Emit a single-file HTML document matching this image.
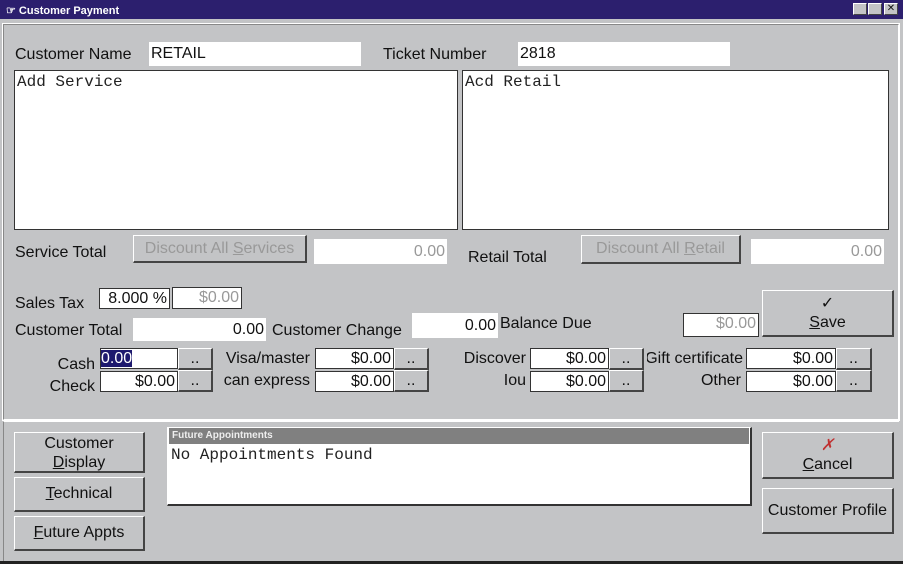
<!DOCTYPE html>
<html><head><meta charset="utf-8"><style>
*{box-sizing:border-box;margin:0;padding:0}
body{width:903px;height:564px;background:#c3c4c6;position:relative;overflow:hidden;font-family:"Liberation Sans",Arial,sans-serif;color:#111}
.a{position:absolute}
.t{position:absolute;font-size:16px;white-space:nowrap;line-height:18px}
.in{position:absolute;background:#fff;font-size:16px;line-height:20px;padding:0 2px;white-space:nowrap;overflow:hidden}
.r{text-align:right}
.g{color:#999}
.btn{position:absolute;background:#c3c4c6;border-top:1px solid #fff;border-left:1px solid #fff;border-right:2px solid #444;border-bottom:2px solid #444;text-align:center;font-size:16px;line-height:19px}
.mono{font-family:"Liberation Mono",monospace;font-size:16px;color:#222}
u{text-decoration:underline}
</style></head><body>
<div class="a" style="left:0;top:0;width:903px;height:19px;background:#2c1f6e"></div>
<div class="t" style="left:6px;top:2px;color:#fff;font-size:11px;font-weight:bold">☞ Customer Payment</div>
<div class="a" style="left:853px;top:3px;width:14px;height:12px;background:#c3c4c6;border:1px solid #fff;border-right-color:#444;border-bottom-color:#444"></div>
<div class="a" style="left:868px;top:3px;width:14px;height:12px;background:#c3c4c6;border:1px solid #fff;border-right-color:#444;border-bottom-color:#444"></div>
<div class="a" style="left:884px;top:3px;width:14px;height:12px;background:#c3c4c6;border:1px solid #fff;border-right-color:#444;border-bottom-color:#444;font-size:10px;line-height:10px;text-align:center">✕</div>
<div class="a" style="left:3px;top:24px;width:896px;height:396px;border:1px solid #888;border-right-color:#fff;border-bottom-color:#fff;outline:1px solid #fff"></div>
<div class="a" style="left:3px;top:421px;width:896px;height:141px;border-top:1px solid #fff;border-left:1px solid #888"></div>
<div class="a" style="left:0;top:561px;width:903px;height:3px;background:#222"></div>

<div class="t" style="left:15px;top:46px">Customer Name</div>
<div class="in" style="left:149px;top:42px;width:212px;height:24px;line-height:24px">RETAIL</div>
<div class="t" style="left:383px;top:46px">Ticket Number</div>
<div class="in" style="left:518px;top:42px;width:212px;height:24px;line-height:24px">2818</div>

<div class="in mono" style="left:14px;top:70px;width:444px;height:160px;border:1px solid #333;line-height:20px;padding:1px 2px">Add Service</div>
<div class="in mono" style="left:462px;top:70px;width:427px;height:160px;border:1px solid #333;line-height:20px;padding:1px 2px">Acd Retail</div>

<div class="t" style="left:15px;top:244px">Service Total</div>
<div class="btn g" style="left:133px;top:235px;width:174px;height:28px;line-height:25px">Discount All <u>S</u>ervices</div>
<div class="in r g" style="left:314px;top:239px;width:133px;height:25px;line-height:25px">0.00</div>
<div class="t" style="left:468px;top:249px">Retail Total</div>
<div class="btn g" style="left:581px;top:235px;width:160px;height:29px;line-height:25px">Discount All <u>R</u>etail</div>
<div class="in r g" style="left:751px;top:239px;width:133px;height:25px;line-height:25px">0.00</div>

<div class="t" style="left:15px;top:295px">Sales Tax</div>
<div class="in r" style="left:99px;top:288px;width:71px;height:21px;border:1px solid #333">8.000 %</div>
<div class="in r g" style="left:172px;top:287px;width:70px;height:22px;border:1px solid #333">$0.00</div>

<div class="t" style="left:15px;top:322px">Customer Total</div>
<div class="in r" style="left:133px;top:318px;width:133px;height:23px;line-height:23px">0.00</div>
<div class="t" style="left:272px;top:322px">Customer Change</div>
<div class="in r" style="left:412px;top:313px;width:86px;height:25px;line-height:25px">0.00</div>
<div class="t" style="left:500px;top:315px">Balance Due</div>
<div class="in r g" style="left:683px;top:313px;width:76px;height:24px;border:1px solid #333">$0.00</div>
<div class="btn" style="left:762px;top:290px;width:132px;height:47px;padding-top:3px">✓<br><u>S</u>ave</div>

<div class="t r" style="left:30px;top:356px;width:65px">Cash</div>
<div class="in" style="left:100px;top:348px;width:78px;height:21px;border:1px solid #333;padding:0"><span style="background:#1e1a6e;color:#fff">0.00</span></div>
<div class="btn" style="left:178px;top:348px;width:35px;height:22px">..</div>
<div class="t r" style="left:30px;top:378px;width:65px">Check</div>
<div class="in r" style="left:100px;top:371px;width:78px;height:21px;border:1px solid #333">$0.00</div>
<div class="btn" style="left:178px;top:370px;width:35px;height:22px">..</div>

<div class="t r" style="left:200px;top:350px;width:110px">Visa/master</div>
<div class="in r" style="left:315px;top:348px;width:79px;height:21px;border:1px solid #333">$0.00</div>
<div class="btn" style="left:394px;top:348px;width:35px;height:22px">..</div>
<div class="t r" style="left:200px;top:372px;width:110px">can express</div>
<div class="in r" style="left:315px;top:371px;width:79px;height:21px;border:1px solid #333">$0.00</div>
<div class="btn" style="left:394px;top:370px;width:35px;height:22px">..</div>

<div class="t r" style="left:426px;top:350px;width:100px">Discover</div>
<div class="in r" style="left:530px;top:348px;width:79px;height:21px;border:1px solid #333">$0.00</div>
<div class="btn" style="left:609px;top:348px;width:35px;height:22px">..</div>
<div class="t r" style="left:426px;top:372px;width:100px">Iou</div>
<div class="in r" style="left:530px;top:371px;width:79px;height:21px;border:1px solid #333">$0.00</div>
<div class="btn" style="left:609px;top:370px;width:35px;height:22px">..</div>

<div class="t" style="left:647px;top:350px;width:96px;overflow:hidden;text-align:right;direction:rtl">Gift certificate</div>
<div class="in r" style="left:746px;top:348px;width:90px;height:21px;border:1px solid #333">$0.00</div>
<div class="btn" style="left:836px;top:348px;width:36px;height:22px">..</div>
<div class="t r" style="left:641px;top:372px;width:100px">Other</div>
<div class="in r" style="left:746px;top:371px;width:90px;height:21px;border:1px solid #333">$0.00</div>
<div class="btn" style="left:836px;top:370px;width:36px;height:22px">..</div>

<div class="btn" style="left:14px;top:432px;width:131px;height:41px;padding-top:1px">Customer<br><u>D</u>isplay</div>
<div class="btn" style="left:14px;top:477px;width:131px;height:35px;line-height:32px"><u>T</u>echnical</div>
<div class="btn" style="left:14px;top:516px;width:131px;height:35px;line-height:32px"><u>F</u>uture Appts</div>

<div class="a" style="left:167px;top:427px;width:585px;height:79px;background:#fff;border:1px solid #fff;border-right:2px solid #333;border-bottom:2px solid #333"></div>
<div class="a" style="left:169px;top:428px;width:580px;height:16px;background:#808080;color:#eee;font-size:10px;font-weight:bold;line-height:16px;padding-left:3px">Future Appointments</div>
<div class="t mono" style="left:171px;top:446px">No Appointments Found</div>

<div class="btn" style="left:762px;top:432px;width:132px;height:47px;padding-top:3px"><span style="color:#c03030;font-style:italic">✗</span><br><u>C</u>ancel</div>
<div class="btn" style="left:762px;top:488px;width:132px;height:46px;line-height:43px;font-size:16px">Customer Profile</div>
</body></html>
